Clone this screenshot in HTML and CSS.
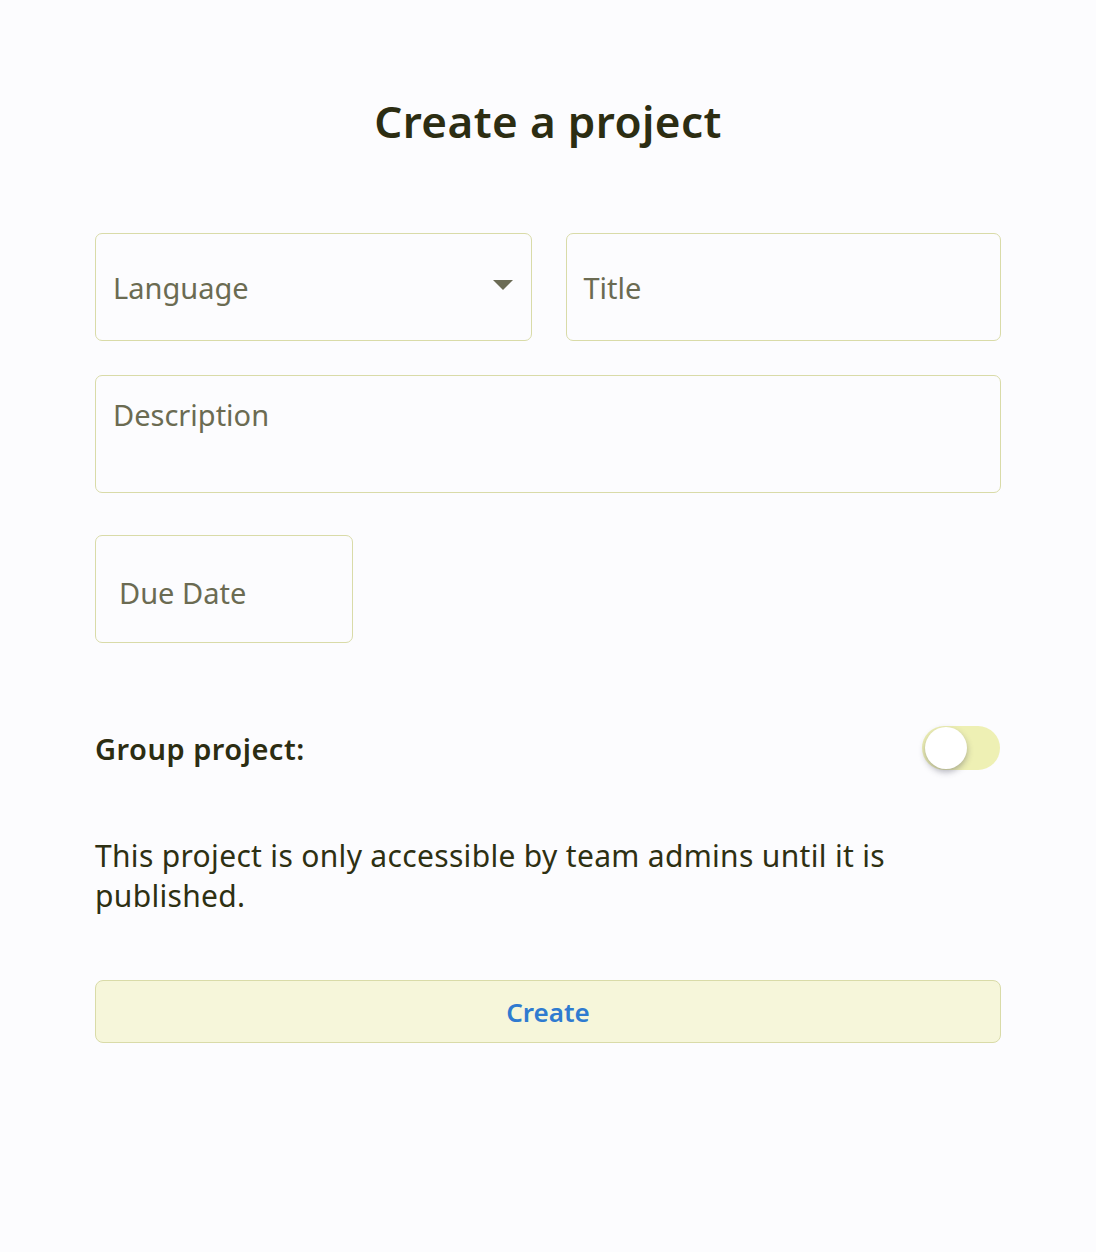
FILE: index.html
```html
<!DOCTYPE html>
<html lang="en">
<head>
<meta charset="utf-8">
<title>Create a project</title>
<link rel="stylesheet" href="styles.css">
</head>
<body>
<main class="page">
  <h1 class="title">Create a project</h1>
  <form class="form">
    <div class="row">
      <div class="field select">
        <span class="placeholder">Language</span>
        <svg class="caret" width="20" height="10" viewBox="0 0 20 10"><path d="M0 0 H20 L10 10 Z" fill="#6b6b55"/></svg>
      </div>
      <div class="field">
        <span class="placeholder">Title</span>
      </div>
    </div>
    <div class="field area">
      <span class="placeholder">Description</span>
    </div>
    <div class="field date">
      <span class="placeholder">Due Date</span>
    </div>
    <div class="group">
      <span class="group-label">Group project:</span>
      <span class="switch"><span class="knob"></span></span>
    </div>
    <p class="note">This project is only accessible by team admins until it is published.</p>
    <button type="button" class="create">Create</button>
  </form>
</main>
</body>
</html>
```
FILE: styles.css
```css
* { box-sizing: border-box; }
html, body { margin: 0; padding: 0; }
body {
  background: #fcfcfe;
  font-family: "Noto Sans", "Open Sans", sans-serif;
  color: #2e3012;
  width: 1096px;
  height: 1252px;
}
.page {
  padding: 92px 95px 0 95px;
}
.title {
  margin: 0;
  text-align: center;
  font-size: 44px;
  line-height: 58px;
  font-weight: 600;
  letter-spacing: 0.4px;
  color: #2c2d12;
}
.form {
  margin-top: 83px;
  display: flex;
  flex-direction: column;
}
.row {
  display: flex;
  gap: 34px;
}
.field {
  position: relative;
  flex: 1;
  height: 108px;
  border: 1.5px solid #d9dba8;
  border-radius: 7px;
  display: flex;
  align-items: center;
  padding: 0 17px;
}
.placeholder {
  font-size: 29px;
  color: #6b6b52;
  line-height: 36px;
  margin-top: 2px;
}
.select { justify-content: space-between; padding-right: 18px; }
.caret { margin-top: -4px; }
.area {
  flex: none;
  margin-top: 34px;
  height: 118px;
  align-items: flex-start;
  padding-top: 19px;
}
.date {
  flex: none;
  margin-top: 42px;
  width: 258px;
  padding-left: 23px;
  padding-top: 6px;
}
.group {
  margin-top: 80px;
  display: flex;
  justify-content: space-between;
  align-items: center;
  height: 50px;
}
.group-label {
  font-size: 29px;
  font-weight: 600;
  letter-spacing: 0.5px;
  color: #2c2d12;
}
.switch {
  position: relative;
  width: 78px;
  height: 44px;
  border-radius: 22px;
  background: #eef0b4;
  margin-right: 1px;
}
.knob {
  position: absolute;
  left: 3px;
  top: 1px;
  width: 42px;
  height: 42px;
  border-radius: 50%;
  background: #ffffff;
  box-shadow: 0 3px 6px rgba(60, 60, 80, 0.38);
}
.note {
  margin: 63px 0 0 0;
  font-size: 30px;
  line-height: 40px;
  letter-spacing: 0.32px;
  color: #2e3012;
  max-width: 830px;
}
.create {
  margin-top: 64px;
  height: 63px;
  width: 100%;
  border: 1.5px solid #d9dba8;
  border-radius: 8px;
  background: #f6f6da;
  font-family: inherit;
  font-size: 26px;
  font-weight: 600;
  color: #2f7bd0;
  cursor: pointer;
}
```
